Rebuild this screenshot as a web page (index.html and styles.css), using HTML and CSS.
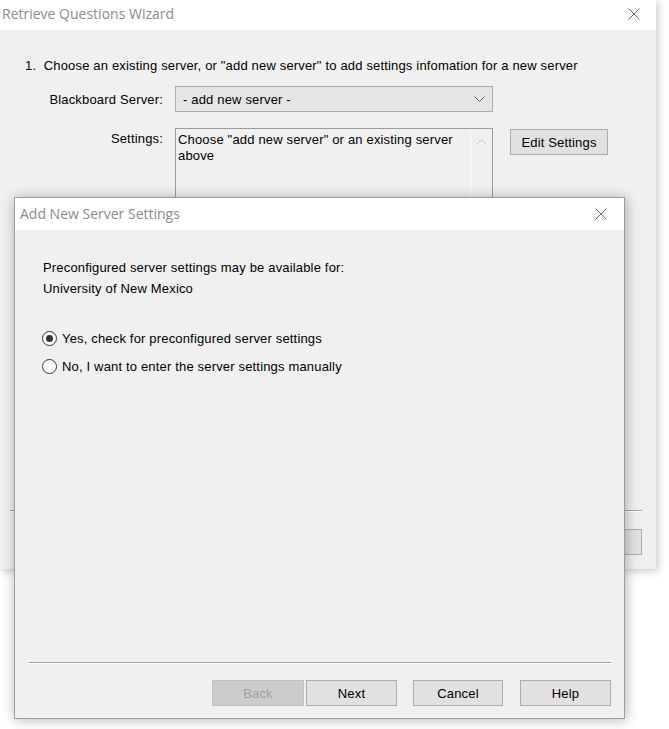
FILE: index.html
```html
<!DOCTYPE html>
<html>
<head>
<meta charset="utf-8">
<link rel="stylesheet" href="styles.css">
</head>
<body>
<div class="desk">
  <div class="win bgwin">
    <div class="titlebar">
      <span class="title">Retrieve Questions Wizard</span>
      <svg class="close" width="12" height="12" viewBox="0 0 12 12"><path d="M0.5 0.5 L11.5 11.5 M11.5 0.5 L0.5 11.5" stroke="#6e6e6e" stroke-width="1" fill="none"/></svg>
    </div>
    <div class="bgbody">
      <p class="step">1.&nbsp; Choose an existing server, or "add new server" to add settings infomation for a new server</p>
      <div class="row row-server">
        <span class="lbl">Blackboard Server:</span>
        <div class="select">
          <span>- add new server -</span>
          <svg width="11" height="6" viewBox="0 0 11 6"><path d="M0.5 0.5 L5.5 5.5 L10.5 0.5" stroke="#606060" fill="none"/></svg>
        </div>
      </div>
      <div class="row row-settings">
        <span class="lbl lbl-top">Settings:</span>
        <div class="textarea">
          <div class="ta-text">Choose "add new server" or an existing server above</div>
          <div class="ta-scroll">
            <svg width="11" height="6" viewBox="0 0 11 6"><path d="M0.5 5.5 L5.5 0.5 L10.5 5.5" stroke="#c4c4c4" fill="none"/></svg>
          </div>
        </div>
        <button class="btn btn-edit">Edit Settings</button>
      </div>
      <div class="footer bgfooter">
        <div class="sep"></div>
        <div class="btnrow">
          <button class="btn w92 disabled">Back</button>
          <button class="btn w91 gap2">Next</button>
          <button class="btn w90 gap16">Cancel</button>
          <button class="btn w91 gap17">Help</button>
        </div>
      </div>
    </div>
  </div>

  <div class="win dlg">
    <div class="titlebar dtitle">
      <span class="title">Add New Server Settings</span>
      <svg class="close" width="12" height="12" viewBox="0 0 12 12"><path d="M0.5 0.5 L11.5 11.5 M11.5 0.5 L0.5 11.5" stroke="#6e6e6e" stroke-width="1" fill="none"/></svg>
    </div>
    <div class="dbody">
      <p class="info">Preconfigured server settings may be available for:</p>
      <p class="info">University of New Mexico</p>
      <div class="radios">
        <label class="radio"><span class="dot checked"></span>Yes, check for preconfigured server settings</label>
        <label class="radio"><span class="dot"></span>No, I want to enter the server settings manually</label>
      </div>
      <div class="footer dfooter">
        <div class="sep"></div>
        <div class="btnrow">
          <button class="btn w92 disabled">Back</button>
          <button class="btn w91 gap2">Next</button>
          <button class="btn w90 gap16">Cancel</button>
          <button class="btn w91 gap17">Help</button>
        </div>
      </div>
    </div>
  </div>
</div>
</body>
</html>
```
FILE: styles.css
```css
* { box-sizing: border-box; }
html, body { margin: 0; padding: 0; background: #ffffff; }
body {
  font-family: "Liberation Sans", Arial, sans-serif;
  font-size: 13px;
  letter-spacing: 0.17px;
  color: #000;
}
.desk {
  position: relative;
  width: 669px;
  height: 729px;
  overflow: hidden;
}
.win {
  background: #f0f0f0;
  display: flex;
  flex-direction: column;
}
.bgwin {
  width: 656px;
  height: 569px;
  box-shadow: 2px 2px 8px rgba(0,0,0,0.22);
}
.titlebar {
  background: #ffffff;
  height: 30px;
  display: flex;
  align-items: center;
  justify-content: space-between;
  flex: none;
}
.title {
  font-family: "Open Sans", "Noto Sans", sans-serif;
  font-size: 14px;
  color: #8c8c8c;
  padding-left: 2px;
  letter-spacing: 0;
}
.bgwin .title { margin-top: -3px; }
.close { margin-right: 17px; }
.bgwin .close { margin-right: 16px; margin-top: -2px; }

.bgbody {
  flex: 1;
  display: flex;
  flex-direction: column;
}
.step {
  margin: 28px 0 0 25px;
  line-height: 16px;
  height: 16px;
}
.row {
  display: flex;
  align-items: flex-start;
}
.row-server { margin-top: 12px; height: 26px; align-items: center; }
.row-settings { margin-top: 16px; }
.lbl {
  width: 163px;
  text-align: right;
  flex: none;
}
.lbl-top { padding-top: 3px; }
.select {
  margin-left: 12px;
  width: 318px;
  height: 26px;
  border: 1px solid #adadad;
  background: #e5e5e5;
  display: flex;
  align-items: center;
  justify-content: space-between;
  padding: 0 7px 0 7px;
}
.textarea {
  margin-left: 12px;
  width: 318px;
  height: 300px;
  border: 1px solid #9c9c9c;
  background: #f0f0f0;
  display: flex;
}
.ta-text {
  flex: 1;
  padding: 3px 0 0 2px;
  line-height: 16px;
}
.ta-scroll {
  width: 22px;
  flex: none;
  border-left: 1px solid #fbfbfb;
  display: flex;
  justify-content: center;
  padding-top: 10px;
}
.ta-scroll svg { display: block; }
.btn {
  font-family: "Liberation Sans", Arial, sans-serif;
  font-size: 13px;
  letter-spacing: 0.17px;
  color: #000;
  height: 26px;
  border: 1px solid #adadad;
  background: #e1e1e1;
  padding: 0;
  margin: 0;
  border-radius: 0;
}
.btn-edit {
  margin-left: 17px;
  margin-top: 1px;
  width: 98px;
}
.footer {
  margin-top: auto;
  flex: none;
}
.sep {
  height: 2px;
  border-top: 1px solid #a0a0a0;
  border-bottom: 1px solid #ffffff;
}
.btnrow {
  display: flex;
  justify-content: flex-end;
}
.bgfooter { padding: 0 14px 14px 10px; }
.bgfooter .btnrow { margin-top: 17px; }

.w92 { width: 92px; }
.w91 { width: 91px; }
.w90 { width: 90px; }
.gap2 { margin-left: 2px; }
.gap16 { margin-left: 16px; }
.gap17 { margin-left: 17px; }
.disabled {
  background: #cccccc;
  border-color: #bfbfbf;
  color: #a0a0a0;
}

.dlg {
  position: absolute;
  left: 14px;
  top: 197px;
  width: 611px;
  height: 522px;
  border: 1px solid #9e9e9e;
  box-shadow: 1px 1px 12px rgba(0,0,0,0.3);
}
.dtitle { height: 32px; }
.dtitle .title { padding-left: 5px; margin-top: -1px; }
.dbody {
  flex: 1;
  display: flex;
  flex-direction: column;
  padding: 27px 0 0 0;
}
.info {
  margin: 0 0 0 28px;
  line-height: 21px;
}
.radios {
  margin: 25px 0 0 27px;
}
.radio {
  display: flex;
  align-items: center;
  height: 28px;
}
.dot {
  width: 15px;
  height: 15px;
  border-radius: 50%;
  border: 1px solid #333;
  background: #fff;
  margin-right: 5px;
  position: relative;
  flex: none;
}
.dot.checked::after {
  content: "";
  position: absolute;
  left: 3px;
  top: 3px;
  width: 7px;
  height: 7px;
  border-radius: 50%;
  background: #333;
}
.dfooter { padding: 0 13px 12px 14px; }
.dfooter .btnrow { margin-top: 16px; }
```
